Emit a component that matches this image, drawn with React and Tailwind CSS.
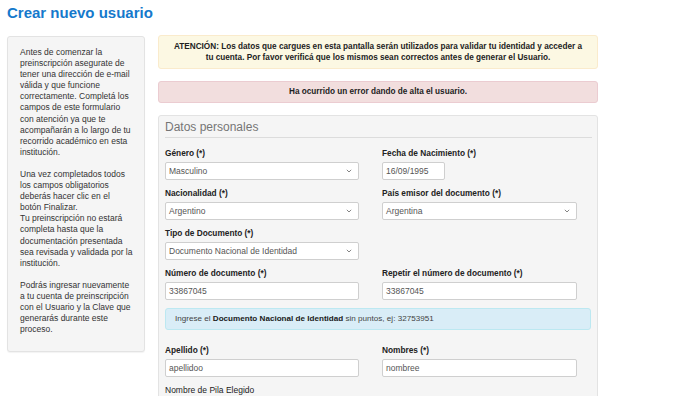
import React from 'react';

const Chevron = () => (
  <svg width="6" height="4" viewBox="0 0 6 4" className="shrink-0">
    <path d="M0.8 0.8 L3 3 L5.2 0.8" fill="none" stroke="#777" strokeWidth="0.9" />
  </svg>
);

const Label = ({ children, bold = true }) => (
  <div className={`h-[11px] leading-[11px] text-[#222] mb-[3px] whitespace-nowrap ${bold ? 'font-bold text-[8.3px]' : 'text-[8.5px]'}`}>
    {children}
  </div>
);

const Select = ({ value, w = 'w-[194px]' }) => (
  <div className={`${w} h-[18px] bg-white border border-[#cfcfcf] rounded-[2px] flex items-center justify-between pl-[3px] pr-[6px]`}>
    <span className="text-[8.5px] text-[#555] whitespace-nowrap">{value}</span>
    <Chevron />
  </div>
);

const Input = ({ value, w = 'w-[194px]' }) => (
  <div className={`${w} h-[18px] bg-white border border-[#cfcfcf] rounded-[2px] flex items-center pl-[3px]`}>
    <span className="text-[8.5px] text-[#555] whitespace-nowrap">{value}</span>
  </div>
);

const Field = ({ label, children, bold }) => (
  <div className="mb-[8px]">
    <Label bold={bold}>{label}</Label>
    {children}
  </div>
);

const sidebar = [
  ['Antes de comenzar la', 'preinscripción asegurate de', 'tener una dirección de e-mail', 'válida y que funcione', 'correctamente. Completá los', 'campos de este formulario', 'con atención ya que te', 'acompañarán a lo largo de tu', 'recorrido académico en esta', 'institución.'],
  ['Una vez completados todos', 'los campos obligatorios', 'deberás hacer clic en el', 'botón Finalizar.', 'Tu preinscripción no estará', 'completa hasta que la', 'documentación presentada', 'sea revisada y validada por la', 'institución.'],
  ['Podrás ingresar nuevamente', 'a tu cuenta de preinscripción', 'con el Usuario y la Clave que', 'generarás durante este', 'proceso.'],
];

export default function App() {
  return (
    <div className="w-[690px] h-[396px] overflow-hidden bg-white font-['Liberation_Sans',Arial,sans-serif]">
      <h1 className="pl-[7px] pt-[3px] h-[36px] text-[15px] leading-[20px] font-bold text-[#1579cc]">
        Crear nuevo usuario
      </h1>

      <div className="flex items-start gap-[13px] pl-[7px]">
        {/* Sidebar */}
        <aside className="w-[138px] h-[316px] bg-[#f5f5f5] border border-[#e3e3e3] rounded-[3px] shadow-[0_1px_1px_rgba(0,0,0,0.05)] pl-[12px] pt-[10px] flex flex-col gap-[11px]">
          {sidebar.map((para, i) => (
            <p key={i} className="text-[8.5px] leading-[11.1px] text-[#333] whitespace-nowrap">
              {para.map((line, j) => (
                <React.Fragment key={j}>
                  {line}
                  {j < para.length - 1 && <br />}
                </React.Fragment>
              ))}
            </p>
          ))}
        </aside>

        {/* Main */}
        <main className="w-[440px] -mt-[1px]">
          <div className="h-[34px] bg-[#fcf8e3] border border-[#faebcc] rounded-[3px] flex items-center justify-center text-center">
            <p className="text-[8.2px] leading-[11px] font-bold text-[#222]">
              ATENCIÓN: Los datos que cargues en esta pantalla serán utilizados para validar tu identidad y acceder a
              <br />
              tu cuenta. Por favor verificá que los mismos sean correctos antes de generar el Usuario.
            </p>
          </div>

          <div className="mt-[12px] h-[22px] bg-[#f2dede] border border-[#ebccd1] rounded-[3px] flex items-center justify-center">
            <p className="text-[8.2px] font-bold text-[#222]">Ha ocurrido un error dando de alta el usuario.</p>
          </div>

          <section className="mt-[12px] h-[300px] bg-[#f5f5f5] border border-[#e3e3e3] rounded-[3px] pl-[6px] pr-[5px] pt-[4px]">
            <h2 className="text-[12px] leading-[14px] text-[#757575] pb-[3px] border-b border-[#dcdcdc] mb-[10px]">
              Datos personales
            </h2>

            <div className="grid grid-cols-[194px_195px] gap-x-[23px]">
              <Field label="Género (*)"><Select value="Masculino" /></Field>
              <Field label="Fecha de Nacimiento (*)"><Input value="16/09/1995" w="w-[63px]" /></Field>
              <Field label="Nacionalidad (*)"><Select value="Argentino" /></Field>
              <Field label="País emisor del documento (*)"><Select value="Argentina" w="w-[195px]" /></Field>
              <Field label="Tipo de Documento (*)"><Select value="Documento Nacional de Identidad" /></Field>
              <div />
              <Field label="Número de documento (*)"><Input value="33867045" /></Field>
              <Field label="Repetir el número de documento (*)"><Input value="33867045" w="w-[195px]" /></Field>
            </div>

            <div className="h-[22px] bg-[#d9edf7] border border-[#bce8f1] rounded-[3px] flex items-center pl-[9px] mb-[15px] mr-[1px]">
              <p className="text-[8.1px] text-[#444] whitespace-nowrap">
                Ingrese el <span className="font-bold text-[#1a1a1a]">Documento Nacional de Identidad</span> sin puntos, ej: 32753951
              </p>
            </div>

            <div className="grid grid-cols-[194px_195px] gap-x-[23px]">
              <Field label="Apellido (*)"><Input value="apellidoo" /></Field>
              <Field label="Nombres (*)"><Input value="nombree" w="w-[195px]" /></Field>
              <Field label="Nombre de Pila Elegido" bold={false}><Input value="" /></Field>
            </div>
          </section>
        </main>
      </div>
    </div>
  );
}
